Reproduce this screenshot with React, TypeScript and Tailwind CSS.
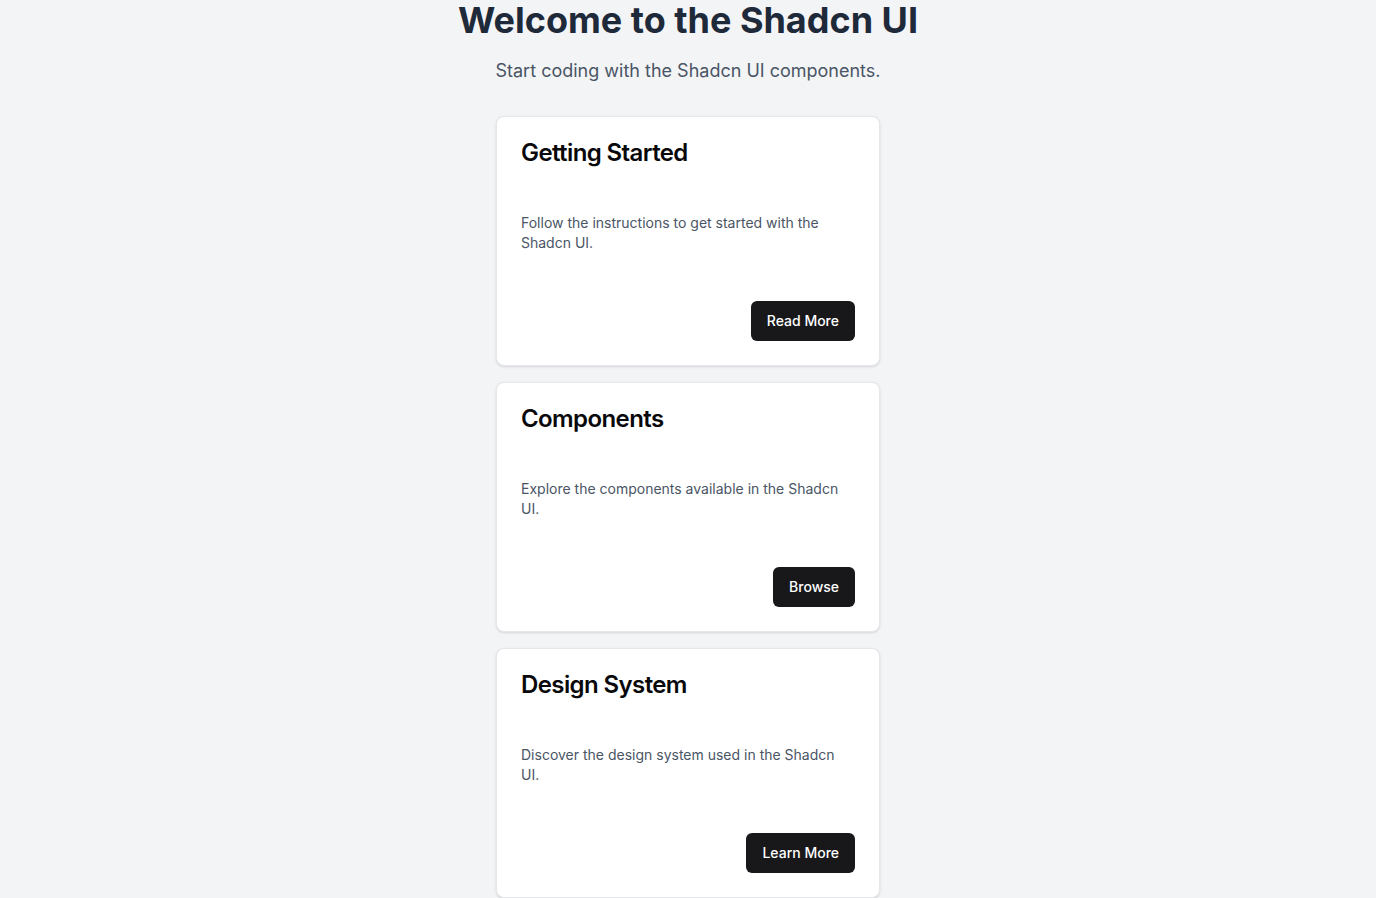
import React from 'react';

const cards = [
  {
    title: 'Getting Started',
    text: 'Follow the instructions to get started with the Shadcn UI.',
    action: 'Read More',
  },
  {
    title: 'Components',
    text: 'Explore the components available in the Shadcn UI.',
    action: 'Browse',
  },
  {
    title: 'Design System',
    text: 'Discover the design system used in the Shadcn UI.',
    action: 'Learn More',
  },
];

export default function App() {
  return (
    <div
      className="min-h-screen bg-gray-100 flex flex-col items-center"
      style={{ fontFamily: 'Inter, "Noto Sans", sans-serif' }}
    >
      <h1 className="text-4xl font-bold text-gray-800 mb-[17px]">Welcome to the Shadcn UI</h1>
      <p className="text-lg text-gray-600 mb-[31px]">Start coding with the Shadcn UI components.</p>

      <div className="flex flex-col gap-4 w-96">
        {cards.map((card) => (
          <div
            key={card.title}
            className="bg-white rounded-lg border border-gray-200 shadow-sm p-6 flex flex-col"
          >
            <h3 className="text-2xl font-semibold leading-none tracking-tight text-[#09090b]">
              {card.title}
            </h3>
            <p className="text-sm text-gray-600 mt-[48px]">{card.text}</p>
            <div className="flex justify-end mt-[48px]">
              <button className="h-10 px-4 rounded-md bg-[#18181b] text-white text-sm font-medium">
                {card.action}
              </button>
            </div>
          </div>
        ))}
      </div>
    </div>
  );
}
